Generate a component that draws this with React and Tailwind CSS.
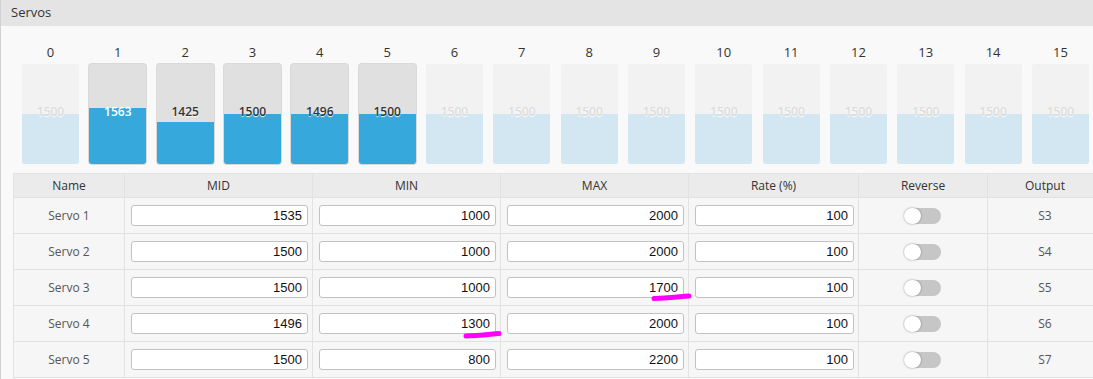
import React from 'react'

const bars = [
  { ch: 0, value: 1500, active: false },
  { ch: 1, value: 1563, active: true },
  { ch: 2, value: 1425, active: true },
  { ch: 3, value: 1500, active: true },
  { ch: 4, value: 1496, active: true },
  { ch: 5, value: 1500, active: true },
  { ch: 6, value: 1500, active: false },
  { ch: 7, value: 1500, active: false },
  { ch: 8, value: 1500, active: false },
  { ch: 9, value: 1500, active: false },
  { ch: 10, value: 1500, active: false },
  { ch: 11, value: 1500, active: false },
  { ch: 12, value: 1500, active: false },
  { ch: 13, value: 1500, active: false },
  { ch: 14, value: 1500, active: false },
  { ch: 15, value: 1500, active: false },
]

const servos = [
  { name: 'Servo 1', mid: 1535, min: 1000, max: 2000, rate: 100, out: 'S3' },
  { name: 'Servo 2', mid: 1500, min: 1000, max: 2000, rate: 100, out: 'S4' },
  { name: 'Servo 3', mid: 1500, min: 1000, max: 1700, rate: 100, out: 'S5' },
  { name: 'Servo 4', mid: 1496, min: 1300, max: 2000, rate: 100, out: 'S6' },
  { name: 'Servo 5', mid: 1500, min: 800, max: 2200, rate: 100, out: 'S7' },
]

const cols = 'grid grid-cols-[111px_188px_188px_188px_170px_129px_115px]'

function Bar({ value, active }) {
  const fill = Math.max(0, Math.min(100, (value - 1000) / 10))
  const covered = fill > 54
  let label = 'text-[#333] [text-shadow:0_1px_1px_#fff]'
  if (!active) label = 'text-[#dcdcdc] [text-shadow:0_1px_1px_#fff]'
  else if (covered) label = 'text-white'
  return (
    <div
      className={`relative w-[57px] h-[100px] rounded-[3px] overflow-hidden ${
        active ? 'bg-[#e0e0e0] shadow-[0_0_0_1px_#d9d9d9]' : 'bg-[#f2f2f2]'
      }`}
    >
      <div
        className={`absolute left-0 right-0 bottom-0 ${active ? 'bg-[#37a8db]' : 'bg-[#d3e7f2]'}`}
        style={{ height: `${fill}px` }}
      />
      <div className={`absolute left-0 right-0 top-[40px] text-center text-[12px] leading-[16px] font-semibold ${label}`}>
        {value}
      </div>
    </div>
  )
}

function NumInput({ value }) {
  return (
    <input
      type="text"
      readOnly
      value={value}
      className="w-full h-[21px] bg-white border border-[#c2c2c2] rounded-[3px] text-right pr-[5px] text-[13px] text-[#111] font-['Liberation_Sans',Arial,sans-serif] outline-none"
    />
  )
}

function Toggle() {
  return (
    <div className="relative w-[36px] h-[16px] rounded-full bg-[#c6c6c6]">
      <div className="absolute -left-[1px] top-0 w-[17px] h-[16px] rounded-full bg-white shadow-[0_0_2px_rgba(0,0,0,0.45)]" />
    </div>
  )
}

export default function App() {
  return (
    <div className="relative w-[1093px] h-[379px] overflow-hidden bg-[#f9f9f9] border-l border-[#d2d2d2] font-['Open_Sans',sans-serif]">
      {/* Title bar */}
      <div className="h-[26px] bg-[#e4e4e4] flex items-center px-[10px] text-[13px] text-[#333]">
        Servos
      </div>

      {/* Output bars */}
      <div className="pt-[17px] ml-[21px] w-[1067px] flex justify-between">
        {bars.map((b) => (
          <div key={b.ch} className="flex flex-col items-center">
            <div className="h-[18px] leading-[18px] text-[13px] text-[#333] mb-[3px]">{b.ch}</div>
            <Bar value={b.value} active={b.active} />
          </div>
        ))}
      </div>

      {/* Servo table */}
      <div className="mt-[9px] ml-[12px] w-[1089px] border-t border-l border-[#e2e2e2] text-[12px]">
        <div className={`${cols} h-[24px] bg-[#ebebeb] text-[#333] font-medium`}>
          {['Name', 'MID', 'MIN', 'MAX', 'Rate (%)', 'Reverse', 'Output'].map((h) => (
            <div key={h} className="flex items-center justify-center border-r border-b border-[#e2e2e2]">
              {h}
            </div>
          ))}
        </div>
        {servos.map((s) => (
          <div key={s.name} className={`${cols} h-[36px] bg-[#f6f6f6]`}>
            <div className="flex items-center justify-center border-r border-b border-[#e2e2e2] text-[#555]">
              {s.name}
            </div>
            {[s.mid, s.min, s.max, s.rate].map((v, i) => (
              <div key={i} className="flex items-center pl-[6px] pr-[4px] border-r border-b border-[#e2e2e2]">
                <NumInput value={v} />
              </div>
            ))}
            <div className="flex items-center justify-center border-r border-b border-[#e2e2e2]">
              <Toggle />
            </div>
            <div className="flex items-center justify-center border-r border-b border-[#e2e2e2] text-[#555]">
              {s.out}
            </div>
          </div>
        ))}
      </div>

      {/* hand-drawn highlight marks */}
      <svg className="absolute left-0 top-0 pointer-events-none" width="1093" height="379">
        <path d="M653 298.5 C 664 298.5, 676 297, 688 296" stroke="#ff00ff" strokeWidth="5" strokeLinecap="round" fill="none" />
        <path d="M465 336 C 476 336, 487 334.5, 498 333.5" stroke="#ff00ff" strokeWidth="5" strokeLinecap="round" fill="none" />
      </svg>
    </div>
  )
}
